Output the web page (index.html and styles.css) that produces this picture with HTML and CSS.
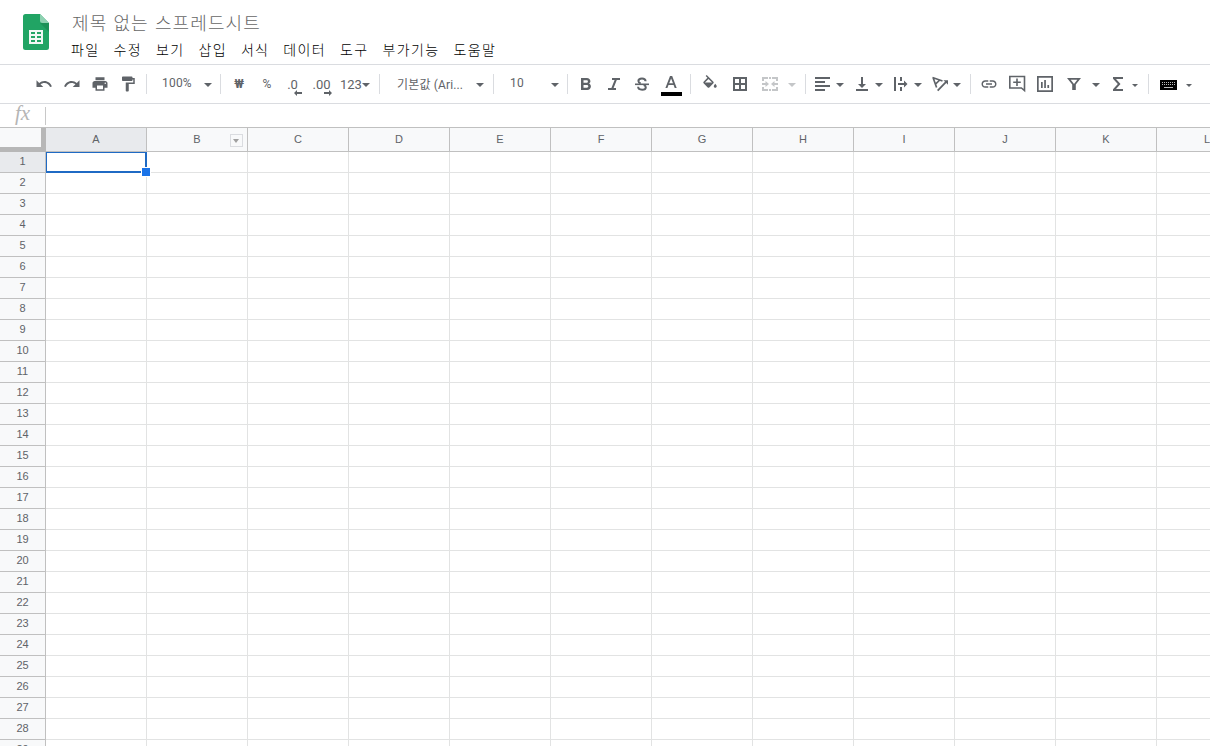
FILE: index.html
```
<!DOCTYPE html>
<html lang="ko">
<head>
    <meta charset="UTF-8">
    <meta name="viewport" content="width=device-width, initial-scale=1.0">
    <title>제목 없는 스프레드시트</title>
    <link rel="stylesheet" href="styles.css">
</head>
<body>
    <header class="header">
        <svg class="logo" width="26" height="36" viewBox="0 0 26 36">
            <path d="M2.500 0H17l9 9v24.500a2.500 2.500 0 0 1-2.500 2.500h-21A2.500 2.500 0 0 1 0 33.500v-31A2.500 2.500 0 0 1 2.500 0z" fill="#21a464"/>
            <path d="M17 9h9v9z" fill="#1b9157"/>
            <path d="M17 0l9 9h-6.500A2.500 2.500 0 0 1 17 6.500z" fill="#8ed1b1"/>
            <path d="M6 16h14v14H6zM8 18v2h4v-2zM14 18v2h4v-2zM8 22v2h4v-2zM14 22v2h4v-2zM8 26v2h4v-2zM14 26v2h4v-2z" fill="#f1f8f4" fill-rule="evenodd"/>
        </svg>
        <div class="header-text">
            <h1 class="title">제목 없는 스프레드시트</h1>
            <nav class="menu">
                <span>파일</span>
                <span>수정</span>
                <span>보기</span>
                <span>삽입</span>
                <span>서식</span>
                <span>데이터</span>
                <span>도구</span>
                <span>부가기능</span>
                <span>도움말</span>
            </nav>
        </div>
    </header>

    <div class="toolbar">
        <div class="btn"><svg class="icon" viewBox="0 0 24 24"><path d="M12.500 8c-2.650 0-5.050.990-6.900 2.600L2 7v9h9l-3.620-3.620c1.390-1.160 3.160-1.880 5.120-1.880 3.540 0 6.550 2.310 7.600 5.500l2.370-.780C21.080 11.030 17.150 8 12.500 8z"/></svg></div>
        <div class="btn"><svg class="icon" viewBox="0 0 24 24"><path d="M18.400 10.600C16.550 8.990 14.150 8 11.500 8c-4.650 0-8.580 3.030-9.960 7.220L3.900 16c1.050-3.190 4.050-5.500 7.600-5.500 1.950 0 3.730.720 5.120 1.880L13 16h9V7l-3.600 3.600z"/></svg></div>
        <div class="btn"><svg class="icon" viewBox="0 0 24 24"><path d="M19 8H5c-1.660 0-3 1.340-3 3v6h4v4h12v-4h4v-6c0-1.660-1.340-3-3-3zm-3 11H8v-5h8v5zm3-7c-.550 0-1-.450-1-1s.450-1 1-1 1 .450 1 1-.450 1-1 1zm-1-9H6v4h12V3z"/></svg></div>
        <div class="btn"><svg class="icon" viewBox="0 0 24 24"><path d="M18 4V3c0-.550-.450-1-1-1H5c-.550 0-1 .450-1 1v4c0 .550.450 1 1 1h12c.550 0 1-.450 1-1V6h1v4H9v11c0 .550.450 1 1 1h2c.550 0 1-.450 1-1v-9h8V4h-3z"/></svg></div>
        <div class="sep"></div>

        <div class="select zoom"><span>100%</span><i class="arrow"></i></div>
        <div class="sep"></div>

        <div class="btn text won">₩</div>
        <div class="btn text percent">%</div>
        <div class="btn text decimal">.0<svg class="decimal-arrow" viewBox="0 0 8 6"><path d="M0 3l3-3v2h5v2H3v2z"/></svg></div>
        <div class="btn text decimal">.00<svg class="decimal-arrow" viewBox="0 0 8 6"><path d="M8 3L5 0v2H0v2h5v2z"/></svg></div>
        <div class="select number-format"><span>123</span><i class="arrow"></i></div>
        <div class="sep"></div>

        <div class="select font-name"><span>기본값 (Ari...</span><i class="arrow"></i></div>
        <div class="sep"></div>
        <div class="select font-size"><span>10</span><i class="arrow"></i></div>
        <div class="sep"></div>

        <div class="btn"><svg class="icon" viewBox="0 0 18 18"><path d="M12.100 8.600c.8-.6 1.300-1.400 1.300-2.300C13.400 4.400 11.900 3 9.900 3H4v12h6.400c1.900 0 3.500-1.500 3.500-3.400 0-1.300-.7-2.400-1.800-3zM6.500 5.200h3.100c.8 0 1.300.5 1.300 1.300s-.5 1.300-1.300 1.300H6.500zm3.400 7.500H6.500V9.900h3.400c.8 0 1.400.6 1.400 1.400s-.6 1.400-1.400 1.400z"/></svg></div>
        <div class="btn"><svg class="icon" viewBox="0 0 18 18"><path d="M7 3v2h2.600l-3.200 8H3v2h8v-2H8.600l3.200-8H15V3z"/></svg></div>
        <div class="btn"><svg class="icon" viewBox="0 0 18 18"><path d="M2 8.500h14v1.600H2z"/><path d="M12.600 6.200C12.500 4.500 11.200 3.400 9 3.400S5.400 4.500 5.400 6c0 1.300.9 2 2.300 2.500M10.700 10c1.300.4 2.100 1.100 2.100 2.200 0 1.600-1.500 2.500-3.700 2.500-2.400 0-3.900-1.100-4-2.900" fill="none" stroke="currentColor" stroke-width="2"/></svg></div>
        <div class="btn wide"><svg class="icon text-color" viewBox="0 0 22 22"><path d="M10 1h2.200l4.500 12h-2l-1.100-3.100H8.500L7.400 13h-2zm1.100 2.400L9.200 8.300H13z"/><path class="swatch" d="M1 17h21v4H1z"/></svg></div>
        <div class="sep"></div>

        <div class="btn wide"><svg class="icon fill" viewBox="0 0 24 24"><path d="M16.560 8.940L7.620 0 6.210 1.410l2.380 2.380-5.150 5.150c-.590.590-.590 1.540 0 2.120l5.500 5.500c.290.290.680.440 1.060.440s.770-.150 1.060-.440l5.500-5.500c.590-.580.590-1.530 0-2.120zM5.210 10L10 5.210 14.790 10zM19 11.500s-2 2.170-2 3.500c0 1.100.900 2 2 2s2-.900 2-2c0-1.330-2-3.500-2-3.500z"/></svg></div>
        <div class="btn wide"><svg class="icon" viewBox="0 0 18 18"><path d="M2 2v14h14V2zm6 12H4v-4h4zm0-6H4V4h4zm6 6h-4v-4h4zm0-6h-4V4h4z"/></svg></div>
        <div class="btn wide disabled"><svg class="icon" viewBox="0 0 18 18"><path d="M1 2h6v2H3v2H1zM11 2h6v4h-2V4h-4zM1 12h2v2h4v2H1zM15 12h2v4h-6v-2h4zM8 2h2v2H8zM8 14h2v2H8zM1 8h3.500V6L8 9l-3.500 3v-2H1zM17 8h-3.500V6L10 9l3.500 3v-2H17z"/></svg></div>
        <div class="merge-arrow disabled"><i class="arrow"></i></div>
        <div class="sep"></div>

        <div class="split"><svg class="icon" viewBox="0 0 18 18"><path d="M1 2h15v2H1zM1 6h10v2H1zM1 10h15v2H1zM1 14h10v2H1z"/></svg><i class="arrow"></i></div>
        <div class="split"><svg class="icon" viewBox="0 0 18 18"><path d="M8 2h2v7h3l-4 4-4-4h3zM3 14h12v2H3z"/></svg><i class="arrow"></i></div>
        <div class="split"><svg class="icon" viewBox="0 0 18 18"><path d="M2 2h2v14H2zM8 2h2v4H8zM8 12h2v4H8zM6 8h6V5.500L15.500 9 12 12.500V10H6z"/></svg><i class="arrow"></i></div>
        <div class="split"><svg class="icon" viewBox="0 0 18 18"><path d="M1.500 2.500l10 3.500M2 2.500l3.600 10M8.800 5l-4.600 4.300" fill="none" stroke="currentColor" stroke-width="1.700"/><path d="M6 15l8-8.300-1.600-1.500H17v4.600l-1.700-1.700-8 8.200z"/></svg><i class="arrow"></i></div>
        <div class="sep"></div>

        <div class="btn"><svg class="icon link" viewBox="0 0 24 24"><path d="M3.900 12c0-1.710 1.390-3.100 3.100-3.100h4V7H7c-2.760 0-5 2.240-5 5s2.240 5 5 5h4v-1.900H7c-1.710 0-3.100-1.390-3.100-3.100zM8 13h8v-2H8v2zm9-6h-4v1.900h4c1.710 0 3.100 1.390 3.100 3.100s-1.390 3.100-3.100 3.100h-4V17h4c2.760 0 5-2.240 5-5s-2.240-5-5-5z"/></svg></div>
        <div class="btn"><svg class="icon" viewBox="0 0 18 18"><path d="M1.800 1.500h14.700v14L13.400 13H1.800z" fill="none" stroke="currentColor" stroke-width="1.600"/><path d="M8.200 3.500h1.600v3h3v1.600h-3v3H8.200v-3h-3V6.500h3z"/></svg></div>
        <div class="btn"><svg class="icon" viewBox="0 0 18 18"><path d="M1 1v16h16V1zm14.300 14.300H2.700V2.700h12.600zM5 7h1.700v6H5zM8.200 5h1.700v8H8.200zM11.400 10h1.700v3h-1.700z"/></svg></div>
        <div class="split filter"><svg class="icon" viewBox="0 0 18 18"><path d="M2 3h14l-5.200 6.500V15H7.200V9.500zm3.700 1.700L9 9l3.300-4.300z" fill-rule="evenodd"/></svg><i class="arrow"></i></div>
        <div class="split sigma"><svg class="icon" viewBox="0 0 18 18"><path d="M4 2h10v2H7l4.500 5L7 14h7v2H4v-1.700L8.800 9 4 3.700z"/></svg><i class="arrow small"></i></div>
        <div class="sep"></div>
        <div class="split keyboard"><svg class="icon" viewBox="0 0 18 18"><path d="M0 5h17v10H0z" fill="#000"/><path d="M2 7.500h14M2 9.500h14" stroke="#bbb" stroke-dasharray="1 1"/><path d="M4 12.500h9" stroke="#bbb"/></svg><i class="arrow small"></i></div>
    </div>

    <div class="formula-bar">
        <span class="fx">fx</span>
        <div class="formula-input"></div>
    </div>

    <table class="grid">
        <thead>
            <tr id="columns"><th class="corner"></th></tr>
        </thead>
        <tbody id="rows"></tbody>
    </table>

    <script>
        const columns = 'ABCDEFGHIJKL'.split('');
        const rowCount = 29;

        const headRow = document.getElementById('columns');
        columns.forEach(name => {
            const th = document.createElement('th');
            th.textContent = name;
            if (name === 'A') th.className = 'active';
            if (name === 'B') {
                const menu = document.createElement('span');
                menu.className = 'column-menu';
                th.appendChild(menu);
            }
            headRow.appendChild(th);
        });

        const body = document.getElementById('rows');
        for (let i = 1; i <= rowCount; i++) {
            const row = body.insertRow();
            const th = document.createElement('th');
            th.textContent = i;
            if (i === 1) th.className = 'active';
            row.appendChild(th);
            columns.forEach(() => row.insertCell());
        }

        // A1 is selected
        const selection = document.createElement('div');
        selection.className = 'selection';
        body.rows[0].cells[1].appendChild(selection);
    </script>
</body>
</html>
```
FILE: styles.css
```
* { box-sizing: border-box; }
body { margin: 0; height: 746px; overflow: hidden; background: #fff; font-family: Roboto, "Noto Sans CJK KR", sans-serif; color: #5f6368; }

.header { display: flex; height: 65px; padding-left: 23px; border-bottom: 1px solid #dadce0; }
.logo { margin-top: 14px; flex: none; }
.header-text { padding: 10px 0 0 22px; }
.title { margin: 0; padding-left: 1px; font: 300 18px/25px "Noto Sans CJK KR", sans-serif; letter-spacing: 1.1px; color: #666; }
.menu { display: flex; gap: 14px; margin-top: 3px; font: 14px/22px "Noto Sans CJK KR", sans-serif; font-weight: 300; letter-spacing: 1.35px; color: #000; }

.toolbar { display: flex; align-items: center; height: 39px; padding-left: 30px; border-bottom: 1px solid #dadce0; font-size: 13px; }
.toolbar > * { flex: none; }
.btn { display: flex; align-items: center; justify-content: center; width: 28px; height: 28px; }
.btn.wide { width: 30px; }
.icon { width: 18px; height: 18px; fill: currentColor; flex: none; }
.icon.text-color { width: 22px; height: 22px; margin-top: 4px; }
.swatch { fill: #000; }
.sep { width: 1px; height: 20px; margin: 0 4px; background: #dadce0; }
.arrow { width: 0; height: 0; border: 4px solid transparent; border-top-color: currentColor; border-bottom: 0; margin-top: 2px; flex: none; }
.arrow.small { border-width: 3px 3px 0; }
.disabled { color: #c4c6c8; }

.select { display: flex; align-items: center; justify-content: space-between; height: 28px; white-space: nowrap; }
.zoom { width: 65px; padding: 0 4px 0 11px; font-size: 12px; }
.number-format { width: 38px; padding: 0 5px 0 3px; }
.font-name { width: 105px; padding: 0 5px 0 13px; font-size: 12px; letter-spacing: 0.15px; }
.font-name span { margin-top: -2px; }
.font-size { width: 65px; padding: 0 4px 0 12px; font-size: 12px; }
.zoom span, .font-size span { margin-top: -2px; letter-spacing: 0.2px; }

.won { font-weight: 700; font-size: 12px; }
.percent { font-size: 12px; }
.decimal { position: relative; padding-right: 5px; font-size: 13px; }
.decimal-arrow { position: absolute; right: 7px; bottom: 2px; width: 8px; height: 6px; fill: currentColor; }
.decimal + .decimal { padding-right: 3px; }
.decimal + .decimal .decimal-arrow { right: 5px; }

.merge-arrow { display: flex; width: 16px; padding-left: 3px; }
.split { display: flex; align-items: center; justify-content: space-between; width: 39px; height: 28px; padding: 0 5px 0 4px; }
.filter { width: 45px; padding: 0 4px 0 6px; }
.sigma { width: 40px; padding: 0 6px 0 5px; }
.keyboard { width: 46px; padding: 0 7px; }

.formula-bar { display: flex; align-items: center; height: 24px; border-bottom: 1px solid #c0c0c0; }
.fx { width: 45px; padding-bottom: 6px; text-align: center; font: italic 21px/20px "Liberation Serif", serif; color: #b5b5b5; }
.formula-input { height: 18px; border-left: 1px solid #c8c8c8; }

.grid { width: 1258px; table-layout: fixed; border-collapse: separate; border-spacing: 0; font: 11px/14px "Liberation Sans", sans-serif; }
.grid th, .grid td { height: 21px; padding: 0; border: solid #e2e3e3; border-width: 0 1px 1px 0; }
.grid th { position: relative; width: 101px; padding-bottom: 2px; background: #f8f9fa; border-color: #c0c0c0; font-weight: 400; color: #5f6368; }
.grid thead th { height: 24px; }
.grid th:first-child { width: 46px; }
.grid th.active { background: #e8eaed; }
.grid .corner { border: solid #b7b7b7; border-width: 0 5px 5px 0; }
.grid td { position: relative; }

.column-menu { position: absolute; top: 6px; right: 4px; width: 13px; height: 13px; border: 1px solid #dadce0; }
.column-menu::after { content: ""; position: absolute; left: 2px; top: 4px; border: 3.5px solid transparent; border-top: 4px solid #a0a0a0; border-bottom: 0; }

.selection { position: absolute; top: 0; left: 0; width: 101px; height: 21px; border: 2px solid #1f6ac4; border-width: 1px 2px 2px 1px; z-index: 1; }
.selection::after { content: ""; position: absolute; right: -6px; bottom: -6px; width: 8px; height: 8px; background: #1a73e8; border: 1px solid #fff; }
```
